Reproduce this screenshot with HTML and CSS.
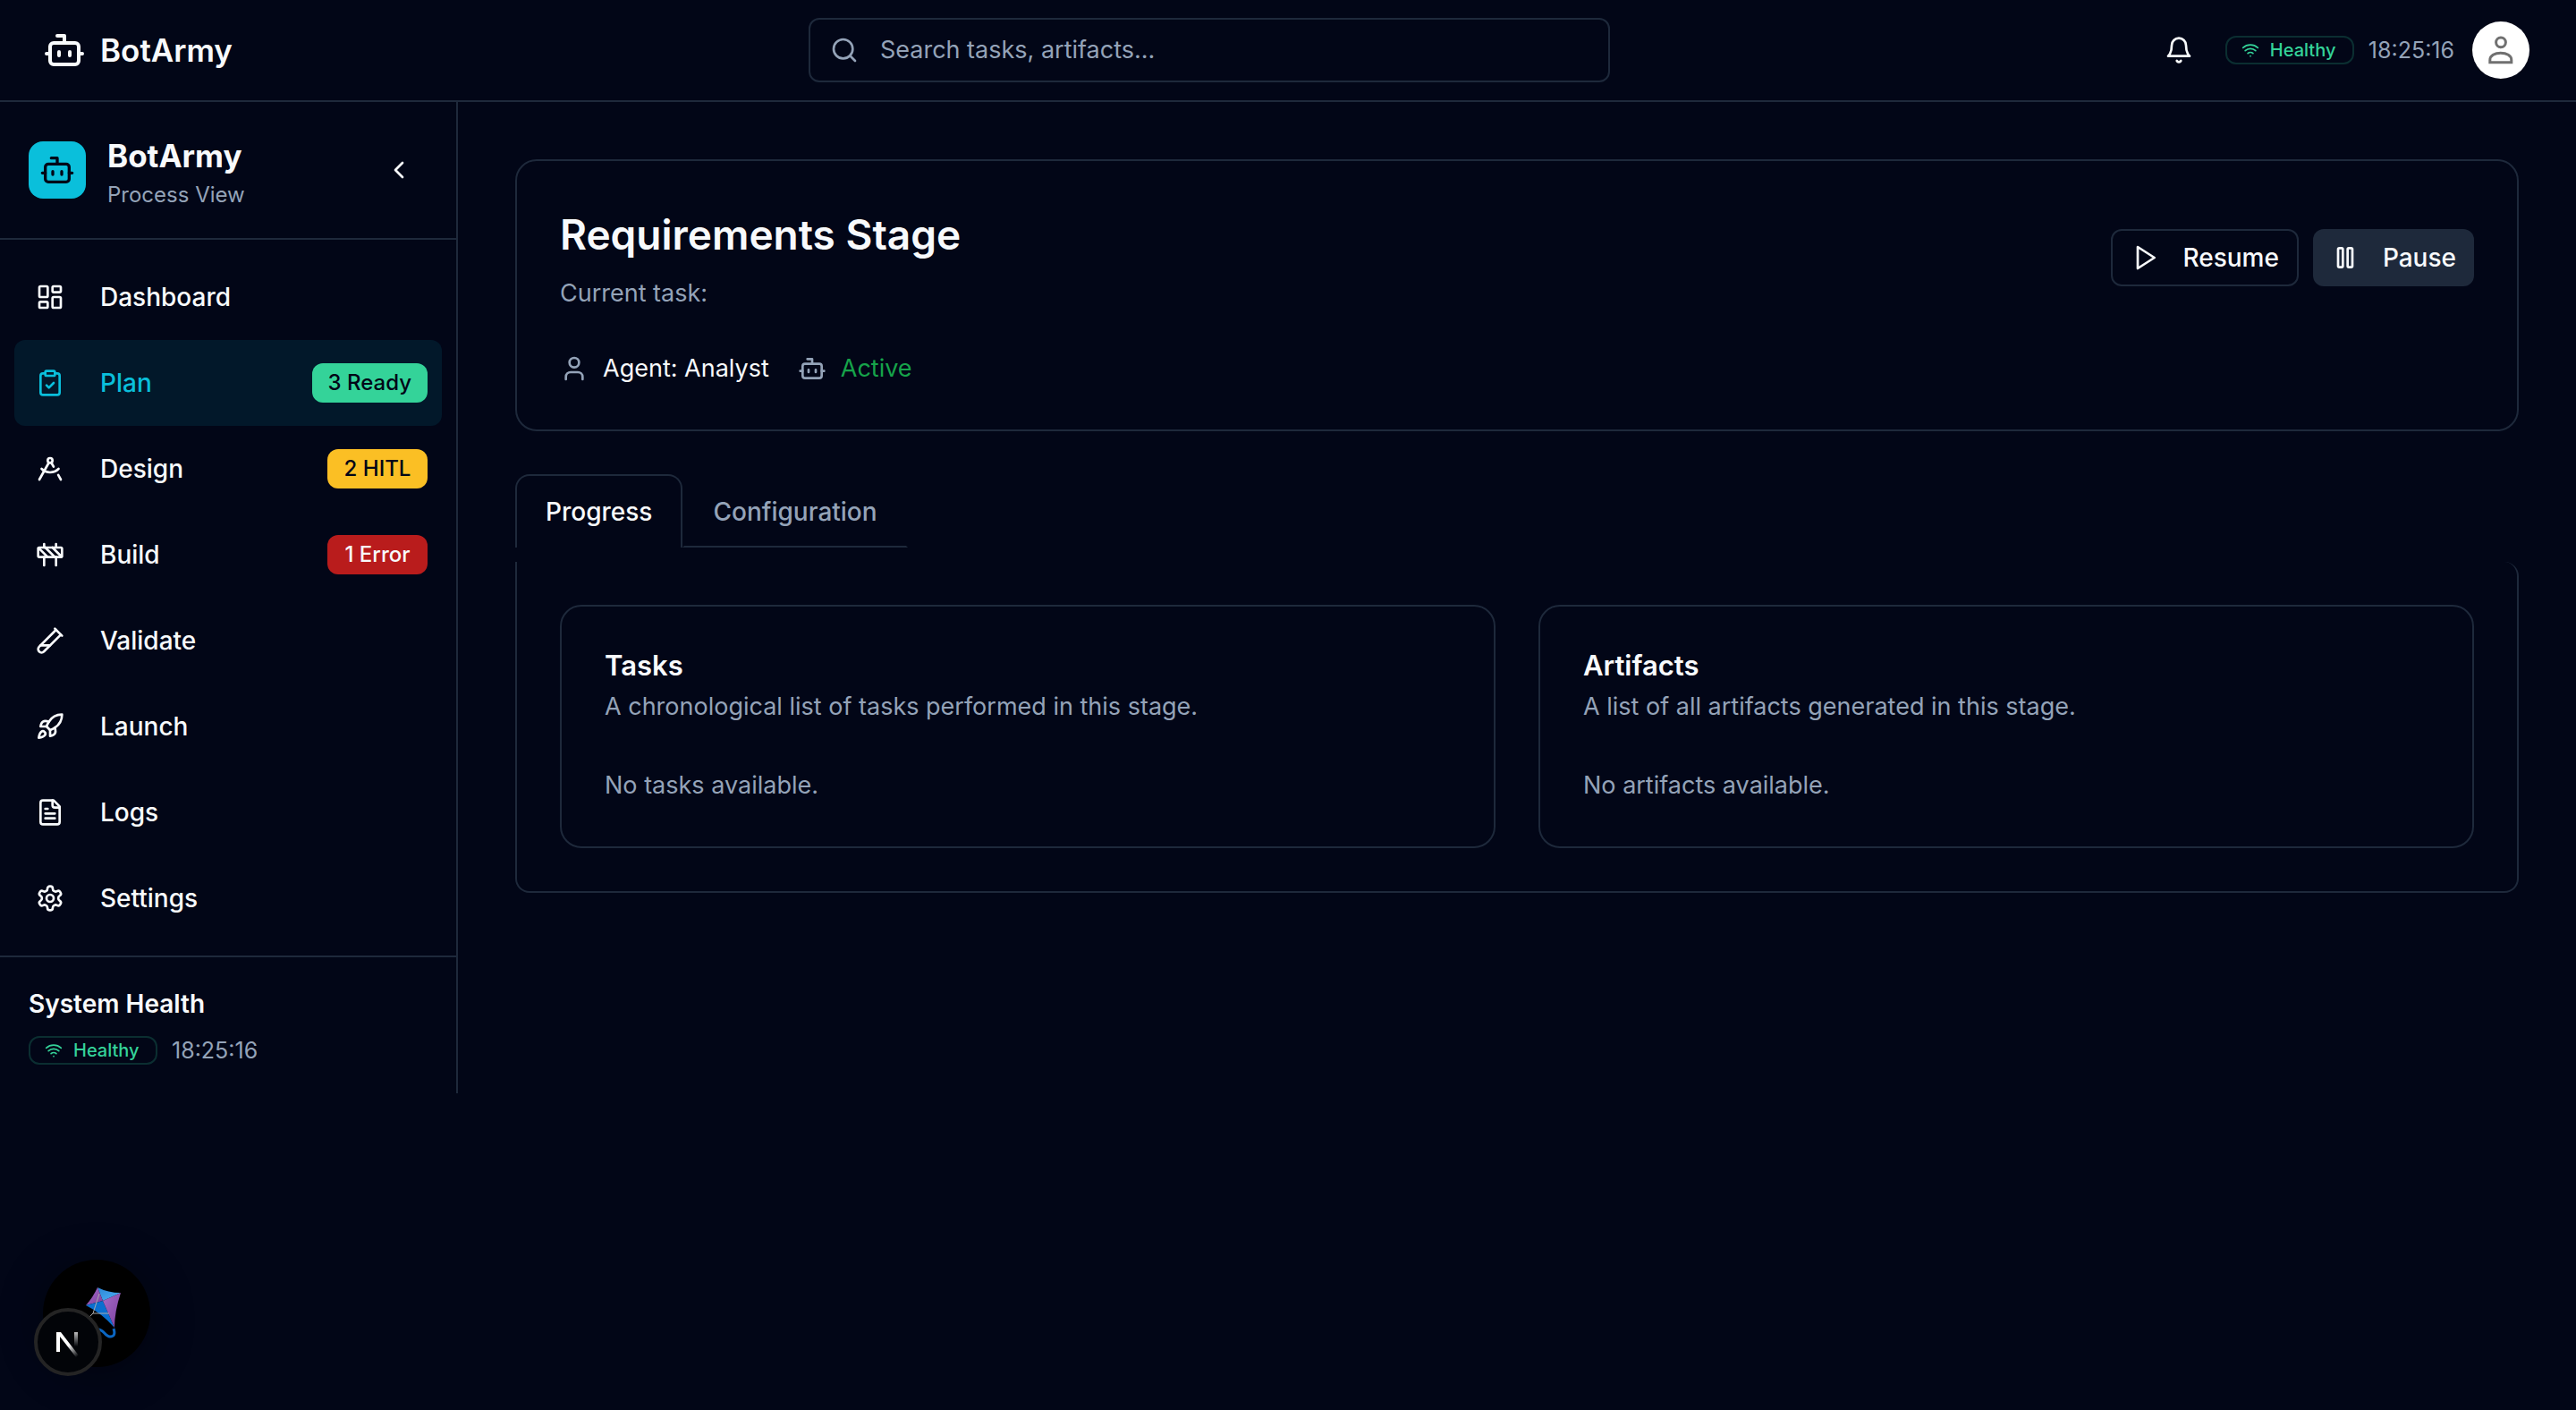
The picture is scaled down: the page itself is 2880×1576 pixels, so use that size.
FILE: index.html
```html
<!DOCTYPE html>
<html lang="en">
<head>
<meta charset="utf-8">
<meta name="viewport" content="width=device-width, initial-scale=1">
<title>BotArmy</title>
<link rel="stylesheet" href="styles.css">
</head>
<body>
<svg class="sprite" aria-hidden="true">
  <symbol id="i-bot" viewBox="0 0 24 24"><path d="M12 8V4H8"/><rect width="16" height="12" x="4" y="8" rx="2"/><path d="M2 14h2M20 14h2M15 13v2M9 13v2"/></symbol>
  <symbol id="i-search" viewBox="0 0 24 24"><circle cx="11" cy="11" r="8"/><path d="m21 21-4.3-4.3"/></symbol>
  <symbol id="i-bell" viewBox="0 0 24 24"><path d="M6 8a6 6 0 0 1 12 0c0 7 3 9 3 9H3s3-2 3-9"/><path d="M10.3 21a1.94 1.94 0 0 0 3.4 0"/></symbol>
  <symbol id="i-wifi" viewBox="0 0 24 24"><path d="M12 20h.01M2 8.82a15 15 0 0 1 20 0M5 12.859a10 10 0 0 1 14 0M8.5 16.429a5 5 0 0 1 7 0"/></symbol>
  <symbol id="i-left" viewBox="0 0 24 24"><path d="m15 18-6-6 6-6"/></symbol>
  <symbol id="i-dashboard" viewBox="0 0 24 24"><rect width="7" height="9" x="3" y="3" rx="1"/><rect width="7" height="5" x="14" y="3" rx="1"/><rect width="7" height="9" x="14" y="12" rx="1"/><rect width="7" height="5" x="3" y="16" rx="1"/></symbol>
  <symbol id="i-plan" viewBox="0 0 24 24"><rect width="8" height="4" x="8" y="2" rx="1"/><path d="M16 4h2a2 2 0 0 1 2 2v14a2 2 0 0 1-2 2H6a2 2 0 0 1-2-2V6a2 2 0 0 1 2-2h2"/><path d="m9 14 2 2 4-4"/></symbol>
  <symbol id="i-design" viewBox="0 0 24 24"><path d="m12.99 6.74 1.93 3.44"/><path d="M19.136 12a10 10 0 0 1-14.271 0"/><path d="m21 21-2.16-3.84"/><path d="m3 21 8.02-14.26"/><circle cx="12" cy="5" r="2"/></symbol>
  <symbol id="i-build" viewBox="0 0 24 24"><rect x="2" y="6" width="20" height="8" rx="1"/><path d="M17 14v7M7 14v7M17 3v3M7 3v3M10 14 2.3 6.3M14 6l7.7 7.7M8 6l8 8"/></symbol>
  <symbol id="i-validate" viewBox="0 0 24 24"><path d="M21 7 6.82 21.18a2.83 2.83 0 0 1-3.99-.01a2.83 2.83 0 0 1 0-4L17 3"/><path d="m16 2 6 6M12 16H4"/></symbol>
  <symbol id="i-launch" viewBox="0 0 24 24"><path d="M4.5 16.5c-1.5 1.26-2 5-2 5s3.74-.5 5-2c.71-.84.7-2.13-.09-2.91a2.18 2.18 0 0 0-2.91-.09z"/><path d="m12 15-3-3a22 22 0 0 1 2-3.95A12.88 12.88 0 0 1 22 2c0 2.72-.78 7.5-6 11a22.35 22.35 0 0 1-4 2z"/><path d="M9 12H4s.55-3.03 2-4c1.62-1.08 5 0 5 0"/><path d="M12 15v5s3.03-.55 4-2c1.08-1.62 0-5 0-5"/></symbol>
  <symbol id="i-logs" viewBox="0 0 24 24"><path d="M15 2H6a2 2 0 0 0-2 2v16a2 2 0 0 0 2 2h12a2 2 0 0 0 2-2V7Z"/><path d="M14 2v4a2 2 0 0 0 2 2h4"/><path d="M10 9H8M16 13H8M16 17H8"/></symbol>
  <symbol id="i-settings" viewBox="0 0 24 24"><path d="M12.22 2h-.44a2 2 0 0 0-2 2v.18a2 2 0 0 1-1 1.73l-.43.25a2 2 0 0 1-2 0l-.15-.08a2 2 0 0 0-2.73.73l-.22.38a2 2 0 0 0 .73 2.73l.15.1a2 2 0 0 1 1 1.72v.51a2 2 0 0 1-1 1.74l-.15.09a2 2 0 0 0-.73 2.73l.22.38a2 2 0 0 0 2.73.73l.15-.08a2 2 0 0 1 2 0l.43.25a2 2 0 0 1 1 1.73V20a2 2 0 0 0 2 2h.44a2 2 0 0 0 2-2v-.18a2 2 0 0 1 1-1.73l.43-.25a2 2 0 0 1 2 0l.15.08a2 2 0 0 0 2.73-.73l.22-.39a2 2 0 0 0-.73-2.73l-.15-.08a2 2 0 0 1-1-1.74v-.5a2 2 0 0 1 1-1.74l.15-.09a2 2 0 0 0 .73-2.73l-.22-.38a2 2 0 0 0-2.73-.73l-.15.08a2 2 0 0 1-2 0l-.43-.25a2 2 0 0 1-1-1.73V4a2 2 0 0 0-2-2z"/><circle cx="12" cy="12" r="3"/></symbol>
  <symbol id="i-user" viewBox="0 0 24 24"><path d="M19 21v-2a4 4 0 0 0-4-4H9a4 4 0 0 0-4 4v2"/><circle cx="12" cy="7" r="4"/></symbol>
  <symbol id="i-play" viewBox="0 0 24 24"><path d="m6 3 14 9-14 9z"/></symbol>
  <symbol id="i-pause" viewBox="0 0 24 24"><rect x="14" y="4" width="4" height="16" rx="1"/><rect x="6" y="4" width="4" height="16" rx="1"/></symbol>
</svg>

<header class="topbar">
  <a class="brand" href="#"><svg class="icon icon-lg"><use href="#i-bot"/></svg>BotArmy</a>
  <label class="search">
    <svg class="icon"><use href="#i-search"/></svg>
    <input type="search" placeholder="Search tasks, artifacts..." aria-label="Search tasks and artifacts">
  </label>
  <div class="topbar-end">
    <button class="icon-button" type="button" aria-label="Notifications"><svg class="icon"><use href="#i-bell"/></svg></button>
    <div class="health">
      <span class="health-badge"><svg class="icon icon-sm"><use href="#i-wifi"/></svg>Healthy</span>
      <time>18:25:16</time>
    </div>
    <button class="avatar" type="button" aria-label="Account">
      <svg viewBox="0 0 64 64"><circle cx="32" cy="23.3" r="5.4"/><path d="M19.8 45.8v-2.6c0-5 5.4-8 12-8s12 3 12 8v2.6z"/></svg>
    </button>
  </div>
</header>

<div class="shell">
  <aside class="sidebar">
    <div class="sidebar-head">
      <span class="logo"><svg class="icon icon-md"><use href="#i-bot"/></svg></span>
      <div class="sidebar-title"><strong>BotArmy</strong><span>Process View</span></div>
      <button class="icon-button" type="button" aria-label="Collapse sidebar"><svg class="icon"><use href="#i-left"/></svg></button>
    </div>
    <nav class="nav">
      <a href="#"><svg class="icon"><use href="#i-dashboard"/></svg><span>Dashboard</span></a>
      <a class="active" href="#" aria-current="page"><svg class="icon"><use href="#i-plan"/></svg><span>Plan</span><b class="tag tag-ready">3 Ready</b></a>
      <a href="#"><svg class="icon"><use href="#i-design"/></svg><span>Design</span><b class="tag tag-hitl">2 HITL</b></a>
      <a href="#"><svg class="icon"><use href="#i-build"/></svg><span>Build</span><b class="tag tag-error">1 Error</b></a>
      <a href="#"><svg class="icon"><use href="#i-validate"/></svg><span>Validate</span></a>
      <a href="#"><svg class="icon"><use href="#i-launch"/></svg><span>Launch</span></a>
      <a href="#"><svg class="icon"><use href="#i-logs"/></svg><span>Logs</span></a>
      <a href="#"><svg class="icon"><use href="#i-settings"/></svg><span>Settings</span></a>
    </nav>
    <div class="sidebar-foot">
      <h2>System Health</h2>
      <div class="health">
        <span class="health-badge"><svg class="icon icon-sm"><use href="#i-wifi"/></svg>Healthy</span>
        <time>18:25:16</time>
      </div>
    </div>
  </aside>

  <main class="content">
    <section class="card stage">
      <div class="stage-head">
        <div>
          <h1>Requirements Stage</h1>
          <p class="muted">Current task:</p>
        </div>
        <div class="actions">
          <button class="button" type="button"><svg class="icon"><use href="#i-play"/></svg>Resume</button>
          <button class="button button-solid" type="button"><svg class="icon"><use href="#i-pause"/></svg>Pause</button>
        </div>
      </div>
      <div class="agent">
        <span><svg class="icon muted"><use href="#i-user"/></svg>Agent: Analyst</span>
        <span class="ok"><svg class="icon muted"><use href="#i-bot"/></svg>Active</span>
      </div>
    </section>

    <section>
      <div class="tabs" role="tablist">
        <button class="tab selected" type="button" role="tab" aria-selected="true">Progress</button>
        <button class="tab" type="button" role="tab" aria-selected="false">Configuration</button>
      </div>
      <div class="panel" role="tabpanel">
        <article class="card">
          <h3>Tasks</h3>
          <p class="muted">A chronological list of tasks performed in this stage.</p>
          <p class="muted empty">No tasks available.</p>
        </article>
        <article class="card">
          <h3>Artifacts</h3>
          <p class="muted">A list of all artifacts generated in this stage.</p>
          <p class="muted empty">No artifacts available.</p>
        </article>
      </div>
    </section>
  </main>
</div>

<div class="dev-tools">
  <button class="kite" type="button" aria-label="Open inspector">
    <svg viewBox="0 0 120 120">
      <defs>
        <linearGradient id="kb" x1="0" y1="0" x2="1" y2="1"><stop offset="0" stop-color="#2a86d6"/><stop offset="1" stop-color="#4fb0f5"/></linearGradient>
        <linearGradient id="kp" x1="0" y1="0" x2="1" y2="1"><stop offset="0" stop-color="#a56cc8"/><stop offset="1" stop-color="#7c3f9e"/></linearGradient>
      </defs>
      <path fill="url(#kb)" d="M61 31q12 6 26 6L67 46z"/>
      <path fill="url(#kp)" d="M61 31l6 15-19 5q8-9 13-20z"/>
      <path fill="#0a6fd0" d="M48 51l19-5 13 30Q66 60 48 51z"/>
      <path fill="url(#kp)" d="M87 37L67 46l13 30q0-18 7-39z"/>
      <path fill="none" stroke="#a9a9a9" stroke-width="1" d="M63 38l-7 22h18M56 60l-8 8"/>
      <path fill="none" stroke="#0b66c2" stroke-width="3" d="M79 77q3 9-4 9c-6 0-7-9-14-8"/>
    </svg>
  </button>
  <button class="next" type="button" aria-label="Open Next.js Dev Tools">
    <svg viewBox="0 0 76 76">
      <defs>
        <linearGradient id="nd" gradientUnits="userSpaceOnUse" x1="38" y1="42" x2="49" y2="54"><stop offset="0" stop-color="#fff"/><stop offset="1" stop-color="#fff" stop-opacity="0"/></linearGradient>
        <linearGradient id="nv" x1="0" y1="0" x2="0" y2="1"><stop offset="0" stop-color="#fff" stop-opacity=".75"/><stop offset="1" stop-color="#fff" stop-opacity="0"/></linearGradient>
      </defs>
      <path fill="url(#nd)" d="M25 27h5l20 26-3 2-18-23v17h-4z"/>
      <rect fill="url(#nv)" x="45" y="27" width="4" height="16"/>
    </svg>
  </button>
</div>
</body>
</html>
```
FILE: styles.css
```css
:root {
  --bg: #020617;
  --line: #1e293b;
  --text: #f8fafc;
  --muted: #94a3b8;
  --primary: #0abfdb;
  --green: #34d399;
}

* { box-sizing: border-box; }

body {
  margin: 0;
  min-height: 100vh;
  background: var(--bg);
  color: var(--text);
  font: 400 27px/40px Inter, "Liberation Sans", sans-serif;
  -webkit-font-smoothing: antialiased;
}

h1, h2, h3, p { margin: 0; }
a { color: inherit; text-decoration: none; }
button, input { font: inherit; color: inherit; }
button { padding: 0; border: 0; background: none; cursor: pointer; }

.sprite { position: absolute; width: 0; height: 0; }

.icon {
  flex: none;
  width: 32px;
  height: 32px;
  fill: none;
  stroke: currentColor;
  stroke-width: 2;
  stroke-linecap: round;
  stroke-linejoin: round;
}
.icon-sm { width: 20px; height: 20px; }
.icon-md { width: 40px; height: 40px; }
.icon-lg { width: 48px; height: 48px; }

.muted { color: var(--muted); }

/* Top bar */
.topbar {
  display: flex;
  align-items: center;
  justify-content: space-between;
  gap: 40px;
  height: 114px;
  padding: 0 52px 0 48px;
  border-bottom: 2px solid var(--line);
}
.brand {
  display: flex;
  align-items: center;
  gap: 16px;
  min-width: 252px;
  font-size: 35px;
  font-weight: 600;
}
.search {
  display: flex;
  align-items: center;
  gap: 24px;
  flex: 0 1 896px;
  height: 72px;
  padding: 0 22px;
  border: 2px solid var(--line);
  border-radius: 12px;
  color: var(--muted);
}
.search input {
  flex: 1;
  min-width: 0;
  padding: 0;
  border: 0;
  outline: 0;
  background: none;
  appearance: none;
}
.search input::placeholder { color: var(--muted); opacity: 1; }
.topbar-end { display: flex; align-items: center; gap: 20px; }
.icon-button {
  display: grid;
  place-items: center;
  width: 64px;
  height: 64px;
}
.avatar {
  width: 64px;
  height: 64px;
  border-radius: 50%;
  background: #fff;
}
.avatar svg {
  display: block;
  fill: none;
  stroke: #707070;
  stroke-width: 3;
}

.health { display: flex; align-items: center; gap: 16px; }
.health time { color: var(--muted); font-size: 25px; line-height: 32px; }
.health-badge {
  display: flex;
  align-items: center;
  gap: 12px;
  min-width: 144px;
  padding: 0 16px;
  border: 2px solid rgb(52 211 153 / 20%);
  border-radius: 12px;
  color: var(--green);
  font-size: 20px;
  font-weight: 500;
  line-height: 28px;
}

/* Sidebar */
.shell { display: flex; align-items: flex-start; }
.sidebar {
  flex: none;
  width: 512px;
  border-right: 2px solid var(--line);
}
.sidebar-head {
  display: flex;
  align-items: center;
  gap: 24px;
  padding: 32px;
  border-bottom: 2px solid var(--line);
}
.logo {
  display: grid;
  place-items: center;
  width: 64px;
  height: 64px;
  border-radius: 16px;
  background: var(--primary);
  color: var(--bg);
}
.sidebar-title { display: flex; flex: 1; flex-direction: column; }
.sidebar-title strong { font-size: 35px; font-weight: 700; line-height: 56px; }
.sidebar-title span { color: var(--muted); font-size: 24px; line-height: 32px; }

.nav { padding: 16px; }
.nav a {
  display: flex;
  align-items: center;
  gap: 40px;
  height: 96px;
  padding: 0 16px 0 24px;
  border-radius: 12px;
  font-size: 28px;
  font-weight: 500;
}
.nav span { flex: 1; }
.nav .active { background: rgb(10 191 219 / 10%); color: var(--primary); }
.tag {
  min-width: 112px;
  padding: 6px 18px;
  border-radius: 12px;
  font-size: 24px;
  font-weight: 500;
  line-height: 32px;
  text-align: center;
  color: var(--bg);
}
.tag-ready { background: var(--green); }
.tag-hitl { background: #fbbf24; }
.tag-error { background: #b91c1c; color: var(--text); }

.sidebar-foot {
  display: flex;
  flex-direction: column;
  gap: 16px;
  padding: 32px;
  border-top: 2px solid var(--line);
}
.sidebar-foot h2 { font-size: 28px; font-weight: 600; }

/* Main content */
.content {
  display: flex;
  flex: 1;
  flex-direction: column;
  gap: 48px;
  min-width: 0;
  padding: 64px;
}
.card {
  padding: 48px;
  border: 2px solid var(--line);
  border-radius: 24px;
}
.stage { display: flex; flex-direction: column; gap: 44px; }
.stage-head { display: flex; align-items: center; justify-content: space-between; }
.stage h1 { margin-bottom: 12px; font-size: 46px; font-weight: 600; line-height: 68px; }
.actions { display: flex; gap: 16px; }
.button {
  display: flex;
  align-items: center;
  gap: 26px;
  height: 64px;
  padding: 0 20px;
  border: 2px solid var(--line);
  border-radius: 12px;
  font-size: 28px;
  font-weight: 500;
}
.button-solid { border: 0; background: var(--line); }
.agent { display: flex; gap: 32px; }
.agent span { display: flex; align-items: center; gap: 16px; }
.agent .ok { color: #16a34a; }

.tabs { display: flex; margin-bottom: 16px; }
.tab {
  height: 82px;
  padding: 2px 32px 0;
  border: 2px solid transparent;
  border-bottom-color: var(--line);
  color: var(--muted);
  font-size: 28px;
  font-weight: 500;
}
.tab.selected {
  padding-top: 0;
  border-color: var(--line);
  border-bottom: 0;
  border-radius: 16px 16px 0 0;
  color: var(--text);
}
.panel {
  display: grid;
  grid-template-columns: 1fr 1fr;
  gap: 48px;
  padding: 48px;
  border: 2px solid var(--line);
  border-top: 0;
  border-radius: 0 16px 16px 16px;
}
.card h3 { margin-bottom: 8px; font-size: 31px; font-weight: 600; line-height: 36px; }
.empty { margin-top: 48px; }

/* Floating developer buttons */
.kite, .next { position: fixed; border-radius: 50%; }
.kite {
  left: 48px;
  bottom: 48px;
  width: 120px;
  height: 120px;
  background: #000;
  box-shadow: 0 8px 48px rgb(0 0 0 / 40%);
}
.next {
  left: 38px;
  bottom: 38px;
  width: 76px;
  height: 76px;
  border: 4px solid #242424;
  background: #020408;
}
.kite svg { display: block; }
.next svg { display: block; margin: -4px; }
```
